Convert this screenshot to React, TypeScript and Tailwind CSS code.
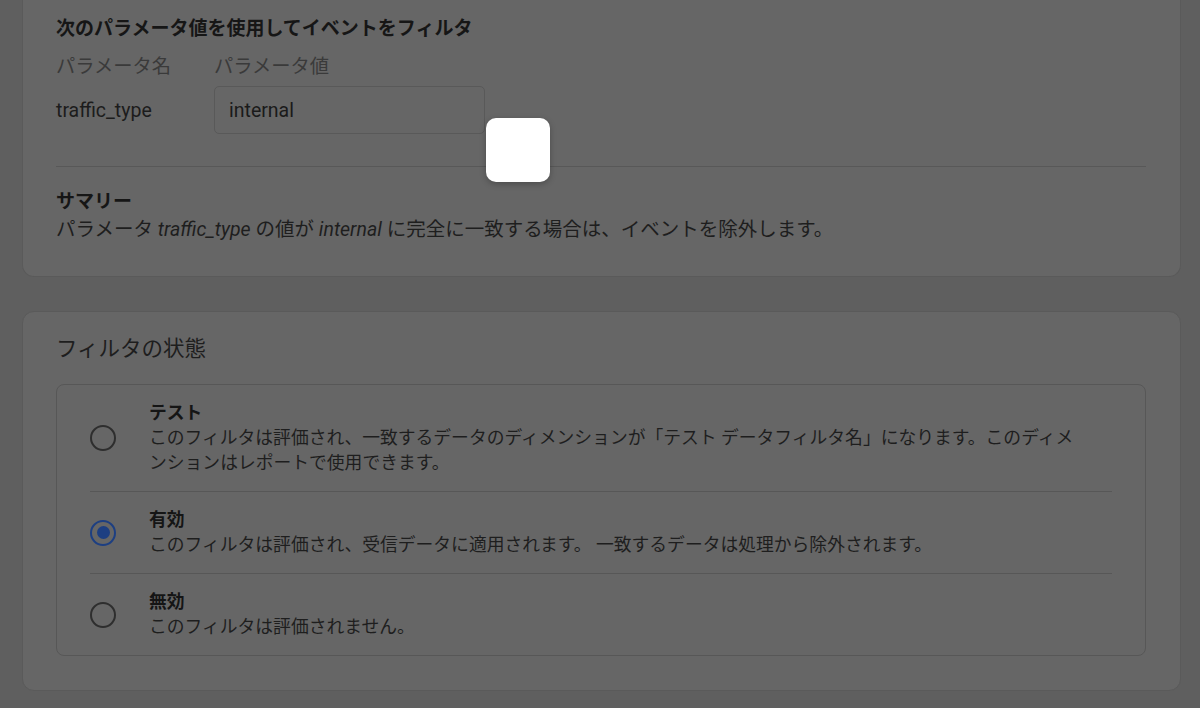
import React from "react";

const font = { fontFamily: 'Roboto, "Noto Sans CJK JP", "Noto Sans", sans-serif' };

function Radio({ checked }: { checked?: boolean }) {
  return checked ? (
    <div className="w-[26px] h-[26px] shrink-0 rounded-full border-[2.5px] border-[#1d3f82] flex items-center justify-center">
      <div className="w-[13px] h-[13px] rounded-full bg-[#1d3f82]" />
    </div>
  ) : (
    <div className="w-[26px] h-[26px] shrink-0 rounded-full border-[2.5px] border-[#2e2e2e]" />
  );
}

function Row({ title, desc, checked, last }: { title: string; desc: string; checked?: boolean; last?: boolean }) {
  return (
    <div className={"flex items-center py-4 " + (last ? "" : "border-b border-[#575757]")}>
      <Radio checked={checked} />
      <div className="ml-[33px] max-w-[935px]">
        <div className="text-[17.8px] leading-6 font-bold text-[#151515]">{title}</div>
        <div className="text-[17.8px] leading-[25px] text-[#1e1e1e]">{desc}</div>
      </div>
    </div>
  );
}

export default function App() {
  return (
    <div className="min-h-[708px] bg-[#5f5f5f] pl-[22px] pr-[19px] relative overflow-hidden" style={font}>
      <div className="bg-[#666666] border border-t-0 border-[#5a5a5a] rounded-b-[12px] pl-[33px] pr-[34px] pt-[17px] pb-8">
        <div className="text-[19px] leading-6 font-bold text-[#161616]">次のパラメータ値を使用してイベントをフィルタ</div>
        <div className="flex mt-[14px] text-[19.3px] leading-6 text-[#3a3a3a]">
          <div className="w-[158px]">パラメータ名</div>
          <div>パラメータ値</div>
        </div>
        <div className="flex items-center mt-[7px]">
          <div className="w-[158px] text-[19.5px] text-[#1c1c1c] pt-[2px]">traffic_type</div>
          <div className="w-[271px] h-[48px] rounded-[5px] border border-[#595959] flex items-center pl-[14px] pt-[2px] text-[19.5px] text-[#1a1a1a]">
            internal
          </div>
        </div>
        <div className="mt-8 border-t border-[#585858]" />
        <div className="mt-[21px] text-[19px] leading-7 font-bold text-[#161616]">サマリー</div>
        <div className="text-[19.5px] leading-7 text-[#1e1e1e]">
          パラメータ <i>traffic_type</i> の値が <i>internal</i> に完全に一致する場合は、イベントを除外します。
        </div>
      </div>

      <div className="mt-[34px] bg-[#666666] border border-[#5a5a5a] rounded-[12px] pl-[33px] pr-[34px] pt-[23px] pb-[34px]">
        <div className="text-[21.5px] leading-7 text-[#1e1e1e]">フィルタの状態</div>
        <div className="mt-[21px] border border-[#575757] rounded-[8px] px-[33px]">
          <Row
            title="テスト"
            desc="このフィルタは評価され、一致するデータのディメンションが「テスト データフィルタ名」になります。このディメンションはレポートで使用できます。"
          />
          <Row
            checked
            title="有効"
            desc="このフィルタは評価され、受信データに適用されます。 一致するデータは処理から除外されます。"
          />
          <Row last title="無効" desc="このフィルタは評価されません。" />
        </div>
      </div>

      <div className="absolute left-[486px] top-[118px] w-[64px] h-[64px] rounded-[10px] bg-white shadow-[0_2px_6px_rgba(0,0,0,0.25)]" />
    </div>
  );
}
